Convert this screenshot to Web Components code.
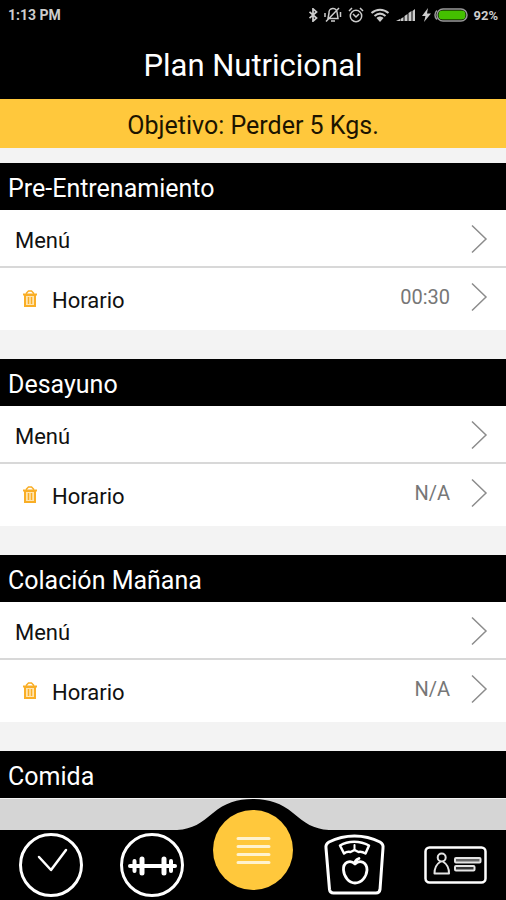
<!DOCTYPE html>
<html lang="es">
<head>
<meta charset="utf-8">
<meta name="viewport" content="width=device-width, initial-scale=1">
<title>Plan Nutricional</title>
<style>
    html, body { height: 100%; margin: 0; }
    body { font-family: Roboto, sans-serif; background: #f3f3f3; }
</style>
</head>
<body>
<nutrition-app>
    <status-bar slot="top" time="1:13 PM" battery="92%"></status-bar>
    <title-bar slot="top">Plan Nutricional</title-bar>
    <goal-banner slot="top">Objetivo: Perder 5 Kgs.</goal-banner>
    <meal-section name="Pre-Entrenamiento" time="00:30"></meal-section>
    <meal-section name="Desayuno" time="N/A"></meal-section>
    <meal-section name="Colación Mañana" time="N/A"></meal-section>
    <meal-section name="Comida"></meal-section>
    <tab-bar slot="bottom"></tab-bar>
</nutrition-app>

<script>
// Contenedor: cabecera fija, lista con scroll y barra inferior
class NutritionApp extends HTMLElement {
    constructor() {
        super();
        this.attachShadow({mode: 'open'});
        this.shadowRoot.innerHTML = `
        <style>
            :host { display: flex; flex-direction: column; height: 100vh; overflow: hidden; }
            main {
                flex: 1;
                min-height: 0;
                box-sizing: border-box;
                padding-top: 15px;
                overflow-y: auto;
                scrollbar-width: none;
                display: flex;
                flex-direction: column;
                gap: 29px;
            }
        </style>
        <slot name="top"></slot>
        <main><slot></slot></main>
        <slot name="bottom"></slot>
        `;
    }
}

// Barra de estado del teléfono
class StatusBar extends HTMLElement {
    connectedCallback() {
        this.attachShadow({mode: 'open'});
        this.shadowRoot.innerHTML = `
        <style>
            :host {
                display: flex;
                justify-content: space-between;
                align-items: center;
                height: 30px;
                padding: 0 8px;
                background: #000;
                color: #ccc;
                font-size: 14px;
                font-weight: 700;
            }
            .icons { display: flex; align-items: center; gap: 6px; }
            .power { display: flex; align-items: center; gap: 2px; font-size: 13px; }
            svg { display: block; fill: none; stroke: #ccc; stroke-width: 1.5; }
            .solid { fill: #ccc; stroke: none; }
        </style>
        <span>${this.getAttribute('time')}</span>
        <div class="icons">
            <svg width="10" height="14" viewBox="0 0 10 16"><path stroke-width="2" d="M1 4.500l8 7L5 15V1l4 3.500-8 7"/></svg>
            <svg width="18" height="16" viewBox="0 0 18 16"><path d="M4 11.500L5 6a4 4 0 0 1 8-1l1 6.500zM7 14h4M2 14.500L15 1M1 6v4M16.500 5v5"/></svg>
            <svg width="16" height="16" viewBox="0 0 16 16"><circle cx="8" cy="9" r="5.700"/><path d="M5 7l3 3 3-3M1 4l3-3M15 4l-3-3"/></svg>
            <svg width="20" height="16" viewBox="0 0 20 16"><path stroke-width="2" d="M1.500 6c5-4.500 12-4.500 17 0M4.500 9c3.500-3 7.500-3 11 0"/><path class="solid" d="M6.500 11c2-2 5-2 7 0L10 15z"/></svg>
            <svg width="20" height="16" viewBox="0 0 20 16"><path class="solid" d="M0 14l4-2v2zM4.500 12l3-2v4h-3zM8.500 9l3-2v7h-3zM12.500 6l3-2v10h-3zM16.500 4l2.500-2v12h-2.500z"/></svg>
            <div class="power">
                <svg width="9" height="14" viewBox="0 0 9 14"><path class="solid" d="M6 0L0 8h3.500L2 14l7-8.500H5z"/></svg>
                <svg width="35" height="14" viewBox="0 0 35 14"><path stroke="#999" d="M4 2.500A6 6 0 0 0 4 11.500"/><rect x="4" y="1" width="30" height="12" rx="6" stroke="#999"/><rect x="5.500" y="2.500" width="27" height="9" rx="4" fill="#44c000" stroke="none"/></svg>
                <span>&nbsp;${this.getAttribute('battery')}</span>
            </div>
        </div>
        `;
    }
}

class TitleBar extends HTMLElement {
    constructor() {
        super();
        this.attachShadow({mode: 'open'});
        this.shadowRoot.innerHTML = `
        <style>
            :host { display: block; background: #000; color: #fff; }
            h1 { margin: 0; padding-top: 3px; font-size: 31px; font-weight: 400; line-height: 66px; text-align: center; }
        </style>
        <h1><slot></slot></h1>
        `;
    }
}

class GoalBanner extends HTMLElement {
    constructor() {
        super();
        this.attachShadow({mode: 'open'});
        this.shadowRoot.innerHTML = `
        <style>
            :host { display: block; background: #ffc83c; color: #1c1400; }
            p { margin: 0; padding-top: 5px; font-size: 25px; line-height: 44px; text-align: center; }
        </style>
        <p><slot></slot></p>
        `;
    }
}

// Una comida del plan: menú y, si hay hora, la fila de horario
class MealSection extends HTMLElement {
    connectedCallback() {
        this.attachShadow({mode: 'open'});
        const time = this.getAttribute('time');
        this.shadowRoot.innerHTML = `
        <style>
            :host { display: block; flex: none; }
            h2 {
                margin: 0;
                padding: 5px 8px 0;
                background: #000;
                color: #fff;
                font-size: 25px;
                font-weight: 400;
                line-height: 42px;
            }
        </style>
        <h2>${this.getAttribute('name')}</h2>
        ${time ? `
        <meal-row>Menú</meal-row>
        <meal-row removable value="${time}">Horario</meal-row>` : ''}
        `;
    }
}

class MealRow extends HTMLElement {
    connectedCallback() {
        this.attachShadow({mode: 'open'});
        const removable = this.hasAttribute('removable');
        const value = this.getAttribute('value') || '';
        this.shadowRoot.innerHTML = `
        <style>
            :host {
                display: flex;
                align-items: center;
                height: 56px;
                padding: 0 18px 0 15px;
                background: #fff;
                color: #111;
                font-size: 22px;
            }
            :host([removable]) { height: 62px; padding-left: 20px; border-top: 2px solid #d8d8d8; }
            button { margin: 0 12px 0 0; padding: 2px; border: 0; background: none; }
            svg { display: block; fill: none; }
            a { flex: 1; display: flex; align-items: center; color: inherit; text-decoration: none; }
            .label { flex: 1; padding-top: 5px; }
            :host([removable]) .label { padding-top: 2px; }
            .value { margin-right: 20px; padding-bottom: 4px; color: #777; font-size: 20px; }
            .chevron { margin-top: 1px; }
            :host([removable]) .chevron { margin: 0 0 4px; }
        </style>
        ${removable ? `
        <button type="button" aria-label="Borrar">
            <svg width="16" height="18" viewBox="0 0 16 18" stroke="#f9ae26">
                <path fill="#ffe5b0" stroke-width="2" d="M3 5v11h10V5z"/>
                <path stroke-width="2" d="M1 4.500h14"/>
                <path stroke-width="1.500" d="M4.500 4V3l2-2h3l2 2v1M6.500 7v7M9.500 7v7"/>
            </svg>
        </button>` : ''}
        <a href="#">
            <span class="label"><slot></slot></span>
            ${value ? `<span class="value">${value}</span>` : ''}
            <svg class="chevron" width="18" height="30" viewBox="0 0 18 30" stroke="#8c8c8c" stroke-width="1.500"><path d="M2 1.500L16 15 2 28.500"/></svg>
        </a>
        `;
    }
}

// Barra inferior con la curva alrededor del botón central
class TabBar extends HTMLElement {
    constructor() {
        super();
        this.attachShadow({mode: 'open'});
        this.shadowRoot.innerHTML = `
        <style>
            :host { display: block; background: #d5d5d5; }
            .hump { display: block; margin: 0 auto; }
            nav { display: grid; grid-template: 70px / repeat(5, 1fr); background: #000; }
            a { place-self: center; }
            a svg { display: block; fill: none; stroke: #fff; stroke-width: 3; stroke-linecap: round; stroke-linejoin: round; }
            .main { align-self: end; margin-bottom: 10px; border-radius: 50%; background: #ffc83c; }
        </style>
        <svg class="hump" width="152" height="31" viewBox="0 0 152 31"><path d="M0 31C16 30 24 24 36 14C48 4 60 0 76 0S104 4 116 14C128 24 136 30 152 31z"/></svg>
        <nav>
            <a href="#" aria-label="Horario">
                <svg width="64" height="64" viewBox="0 0 64 64"><circle cx="32" cy="32" r="30.500"/><path stroke-width="2.500" d="M20 24l12 13L47 17"/></svg>
            </a>
            <a href="#" aria-label="Rutina">
                <svg width="64" height="64" viewBox="0 0 64 64"><circle cx="32" cy="32" r="30.500"/><path stroke-width="5" d="M22 26v14M44 26v14"/><path stroke-width="4" d="M14.500 28v10M51 28v10"/><path stroke-width="4" d="M10 33h45"/></svg>
            </a>
            <a href="#" class="main" aria-label="Plan">
                <svg width="80" height="80" viewBox="0 0 80 80"><path stroke="#fff3cf" stroke-width="3" d="M25 28.500h31M25 36.500h31M25 44.500h31M25 52.500h31"/></svg>
            </a>
            <a href="#" aria-label="Peso">
                <svg width="64" height="64" viewBox="0 0 64 64">
                    <path d="M4 15C3.500 12 4.500 10.500 7 9C23 1 42 1 58 9C60.500 10.500 61.500 12 61 15L58 56.500Q57.500 60 54 60H11.500Q8 60 7.500 56.500z"/>
                    <path stroke-width="2.500" d="M18 12.500C26 7.500 38 7.500 47 12.500L43.500 20.500C41 19 38.500 18.500 36.500 19L32.500 17L28.500 19C26.500 18.500 24 19 22 20.500z"/>
                    <path stroke-width="2" d="M32.500 12v5"/>
                    <path stroke-width="2.800" d="M33 31C28 26 21 29.500 21.500 37C22 44 27 50 33 50C39.500 50 44.500 44 45 37C45 29.500 38 26 33 31C32.500 28.500 34.500 26.500 37 25.500"/>
                </svg>
            </a>
            <a href="#" aria-label="Perfil">
                <svg width="64" height="40" viewBox="0 0 64 40">
                    <rect x="2.500" y="2.500" width="60" height="35" rx="4" stroke-width="2.500"/>
                    <g stroke-width="2" stroke="#e4e4e4"><circle cx="18.700" cy="12.500" r="4"/><path d="M17 17C13 19.500 11.500 23 11.500 28.500h14.500C26 23 24.500 19.500 20.500 17"/>
                    <rect x="32" y="13" width="25.500" height="4.500" rx="1" fill="#666"/><rect x="32" y="21" width="19.500" height="4.500" rx="1" fill="#333"/></g>
                </svg>
            </a>
        </nav>
        `;
    }
}

customElements.define('nutrition-app', NutritionApp);
customElements.define('status-bar', StatusBar);
customElements.define('title-bar', TitleBar);
customElements.define('goal-banner', GoalBanner);
customElements.define('meal-row', MealRow);
customElements.define('meal-section', MealSection);
customElements.define('tab-bar', TabBar);
</script>
</body>
</html>
